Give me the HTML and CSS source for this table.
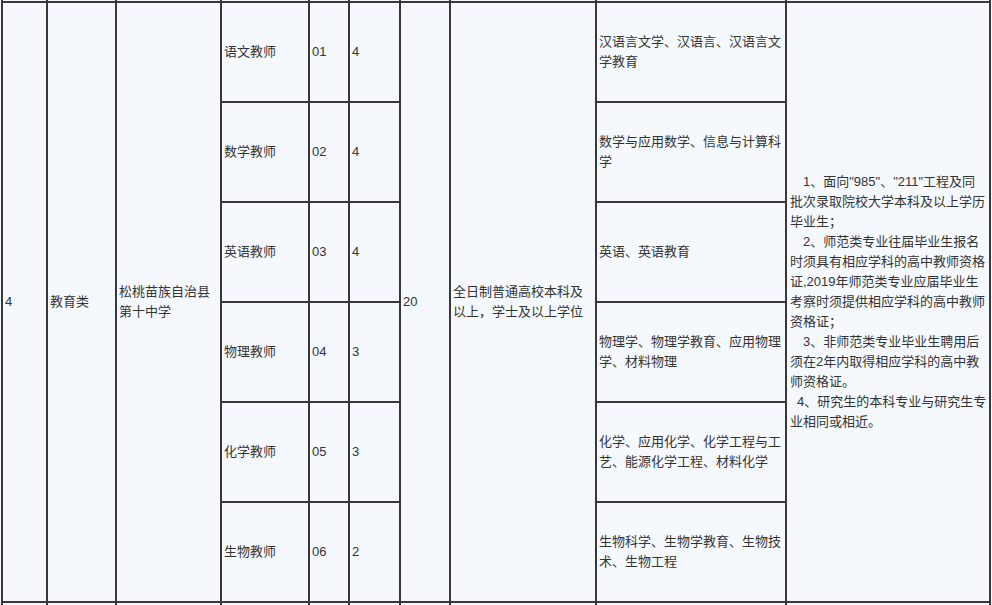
FILE: index.html
```html
<!DOCTYPE html>
<html lang="zh-CN">
<head>
<meta charset="utf-8">
<title>招聘岗位表</title>
<link rel="stylesheet" href="styles.css">
</head>
<body>
<div class="sheet">
<table class="grid">
  <colgroup>
    <col class="c-no"><col class="c-type"><col class="c-unit"><col class="c-post"><col class="c-code"><col class="c-num"><col class="c-total"><col class="c-edu"><col class="c-major"><col class="c-req">
  </colgroup>
  <tbody>
    <tr class="edge"><td></td><td></td><td></td><td></td><td></td><td></td><td></td><td></td><td></td><td></td></tr>
    <tr>
      <td rowspan="6">4</td>
      <td rowspan="6">教育类</td>
      <td rowspan="6">松桃苗族自治县第十中学</td>
      <td>语文教师</td>
      <td>01</td>
      <td>4</td>
      <td rowspan="6">20</td>
      <td rowspan="6">全日制普通高校本科及以上，学士及以上学位</td>
      <td>汉语言文学、汉语言、汉语言文学教育</td>
      <td rowspan="6" class="req">
        <p class="item">1、面向"985"、"211"工程及同批次录取院校大学本科及以上学历毕业生；</p>
        <p class="item">2、师范类专业往届毕业生报名时须具有相应学科的高中教师资格证,2019年师范类专业应届毕业生考察时须提供相应学科的高中教师资格证；</p>
        <p class="item">3、非师范类专业毕业生聘用后须在2年内取得相应学科的高中教师资格证。</p>
        <p class="item item-short">4、研究生的本科专业与研究生专业相同或相近。</p>
      </td>
    </tr>
    <tr>
      <td>数学教师</td><td>02</td><td>4</td>
      <td>数学与应用数学、信息与计算科学</td>
    </tr>
    <tr>
      <td>英语教师</td><td>03</td><td>4</td>
      <td>英语、英语教育</td>
    </tr>
    <tr>
      <td>物理教师</td><td>04</td><td>3</td>
      <td>物理学、物理学教育、应用物理学、材料物理</td>
    </tr>
    <tr>
      <td>化学教师</td><td>05</td><td>3</td>
      <td>化学、应用化学、化学工程与工艺、能源化学工程、材料化学</td>
    </tr>
    <tr>
      <td>生物教师</td><td>06</td><td>2</td>
      <td>生物科学、生物学教育、生物技术、生物工程</td>
    </tr>
    <tr class="edge"><td></td><td></td><td></td><td></td><td></td><td></td><td></td><td></td><td></td><td></td></tr>
  </tbody>
</table>
</div>
</body>
</html>
```

FILE: styles.css
```css
html, body {
  margin: 0;
  padding: 0;
  background: #f5f9fd;
}

.sheet {
  width: 992px;
  height: 605px;
  overflow: hidden;
}

.grid {
  border-collapse: collapse;
  table-layout: fixed;
  width: 989px;
  margin-top: -21px;
  margin-left: 1px;
  background: #f5f9fd;
  font-family: "Liberation Sans", "Noto Sans CJK SC", sans-serif;
  font-size: 13px;
  line-height: 20px;
  color: #333;
}

.c-no { width: 45px; }
.c-type { width: 69px; }
.c-unit { width: 105px; }
.c-post { width: 88px; }
.c-code { width: 40px; }
.c-num { width: 51px; }
.c-total { width: 50px; }
.c-edu { width: 146px; }
.c-major { width: 190px; }
.c-req { width: 204px; }

.grid td {
  border: 2px solid #383838;
  padding: 0 2px;
  vertical-align: middle;
  text-align: left;
  height: 98px;
  word-break: break-all;
}

.grid tr.edge td {
  height: 20px;
}

.grid td.req {
  padding-left: 3px;
  padding-right: 2px;
}

.item {
  margin: 0;
  text-indent: 13px;
}

.item-short {
  text-indent: 7px;
}
```
